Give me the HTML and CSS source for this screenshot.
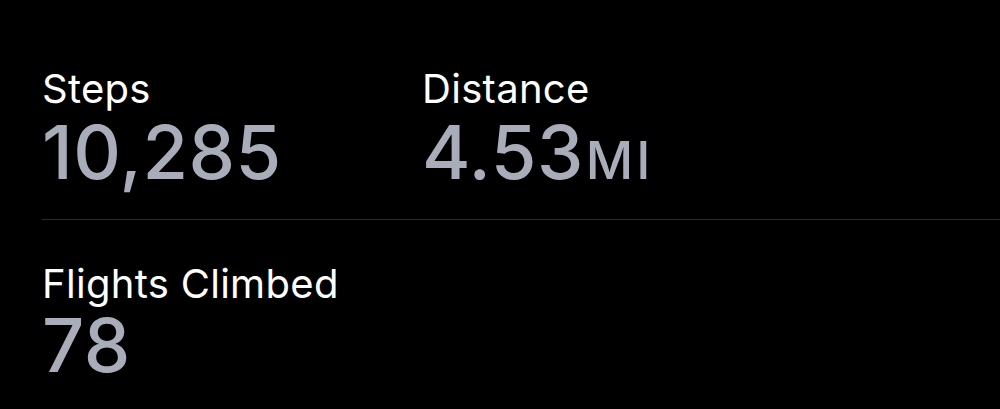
FILE: index.html
```html
<!DOCTYPE html>
<html lang="en">
<head>
<meta charset="utf-8">
<title>Activity</title>
<link rel="stylesheet" href="styles.css">
</head>
<body>
  <main class="summary">
    <section class="row">
      <div class="metric metric-steps">
        <div class="label">Steps</div>
        <div class="value">10,285</div>
      </div>
      <div class="metric">
        <div class="label">Distance</div>
        <div class="value">4.53<span class="unit">MI</span></div>
      </div>
    </section>
    <section class="row row-second">
      <div class="metric">
        <div class="label">Flights Climbed</div>
        <div class="value value-tight">78</div>
      </div>
    </section>
  </main>
</body>
</html>
```

FILE: styles.css
```css
html, body {
  margin: 0;
  padding: 0;
  background: #000;
}

body {
  width: 1000px;
  height: 409px;
  overflow: hidden;
  font-family: Inter, "Noto Sans", sans-serif;
  -webkit-font-smoothing: antialiased;
}

.summary {
  padding: 66px 0 0 42px;
}

.row {
  display: flex;
  padding-bottom: 18px;
  border-bottom: 1px solid #2c2c2e;
}

.row-second {
  border-bottom: none;
  padding-top: 41px;
}

.metric-steps {
  width: 380px;
}

.label {
  color: #ffffff;
  font-size: 40px;
  line-height: 46px;
  font-weight: 400;
  letter-spacing: 0.3px;
}

.value {
  color: #a9acb9;
  font-size: 74px;
  line-height: 80px;
  font-weight: 500;
  letter-spacing: 0.5px;
}

.value-tight {
  line-height: 76px;
}

.unit {
  font-size: 52px;
  letter-spacing: 3px;
  margin-left: 2px;
}
```
